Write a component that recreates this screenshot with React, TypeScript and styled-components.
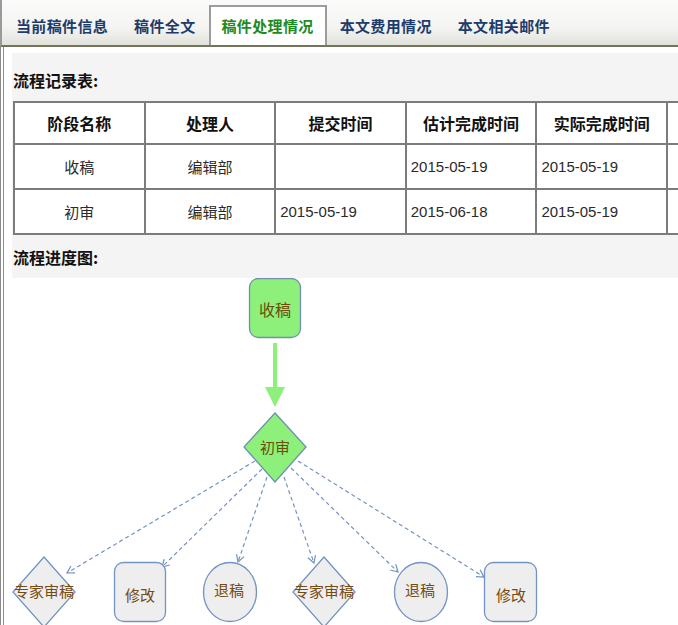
import React from "react";
import styled, { createGlobalStyle } from "styled-components";

const Global = createGlobalStyle`
  html, body { margin: 0; padding: 0; background: #fff; overflow: hidden; }
  body { font-family: "Noto Sans CJK SC", "Liberation Sans", sans-serif; }
`;

const Page = styled.div`
  width: 678px;
  height: 625px;
  overflow: hidden;
`;

const TabBar = styled.div`
  display: flex;
  align-items: flex-end;
  height: 45px;
  padding-left: 1px;
  border-left: 2px solid #9a9a9a;
  border-bottom: 2px solid #74745a;
  background: linear-gradient(#fbfbfb 0%, #f4f4f2 60%, #e2e2dc 100%);
  box-sizing: content-box;
`;

const Tab = styled.div<{ $active?: boolean }>`
  height: 40px;
  box-sizing: border-box;
  padding: 9px 11px 0 11px;
  border: 2px solid ${(p) => (p.$active ? "#9c9c9c" : "transparent")};
  border-bottom: none;
  background: ${(p) => (p.$active ? "#fff" : "transparent")};
  color: ${(p) => (p.$active ? "#1f8a1f" : "#1d3c6c")};
  font-size: 15px;
  font-weight: 700;
  line-height: 20px;
  letter-spacing: 0.35px;
  white-space: nowrap;
`;

const Content = styled.div`
  border-left: 4px double #8a8a8a;
  padding: 6px 0 0 8px;
  height: 600px;
`;

const InfoPanel = styled.div`
  background: #f4f4f4;
  padding-left: 1px;
  overflow: hidden;
`;

const SectionTitle = styled.div<{ $top: number; $bottom: number }>`
  padding-top: ${(p) => p.$top}px;
  padding-bottom: ${(p) => p.$bottom}px;
  font-size: 16px;
  font-weight: 700;
  line-height: 22px;
  color: #111;
`;

const FlowTable = styled.table`
  border-collapse: collapse;
  table-layout: fixed;
  width: 780px;
  background: #fff;
`;

const HeadCell = styled.th`
  width: 128.6px;
  height: 40px;
  border: 2px solid #7c7c7c;
  font-size: 16px;
  font-weight: 700;
  color: #111;
  text-align: center;
  padding: 0;
`;

const Cell = styled.td<{ $date?: boolean }>`
  height: 43px;
  border: 2px solid #7c7c7c;
  padding: 0 0 0 ${(p) => (p.$date ? "4px" : "0")};
  text-align: ${(p) => (p.$date ? "left" : "center")};
  font-family: ${(p) =>
    p.$date ? `"Liberation Sans", Arial, sans-serif` : `"Noto Sans CJK SC", sans-serif`};
  font-size: 15px;
  color: #2a2a2a;
`;

const Diagram = styled.svg`
  display: block;
  font-family: "Noto Sans CJK SC", sans-serif;
`;

const rows = [
  ["收稿", "编辑部", "", "2015-05-19", "2015-05-19"],
  ["初审", "编辑部", "2015-05-19", "2015-06-18", "2015-05-19"],
];

const heads = ["阶段名称", "处理人", "提交时间", "估计完成时间", "实际完成时间", ""];

const dashed = [
  [255, 461, 67, 573],
  [262, 469, 162, 567],
  [267, 477, 238, 562],
  [284, 477, 314, 563],
  [291, 468, 398, 572],
  [298, 461, 484, 577],
];

const NODE_STROKE = "#7393c4";
const GRAY_FILL = "#eeeeef";
const TXT = "#744a10";

function FlowChart() {
  return (
    <Diagram width={666} height={350} viewBox="12 278 666 350">
      <defs>
        <marker id="open" markerWidth="10" markerHeight="10" refX="8" refY="5" orient="auto" markerUnits="userSpaceOnUse">
          <polyline points="1,1 8,5 1,9" fill="none" stroke={NODE_STROKE} strokeWidth="1.2" />
        </marker>
      </defs>

      <rect x={249.5} y={278.5} width={51} height={59} rx={9} fill="#8cf07a" stroke="#6f90ae" strokeWidth={1.3} />
      <text x={275} y={309} fontSize={16} fill="#6b4c08" textAnchor="middle" dominantBaseline="central">收稿</text>

      <line x1={275} y1={343} x2={275} y2={389} stroke="#8cf07a" strokeWidth={4} />
      <polygon points="265,387 285,387 275,407" fill="#8cf07a" />

      <polygon points="275,413 306,447 275,482 244,447" fill="#8cf07a" stroke="#6f90ae" strokeWidth={1.3} />
      <text x={275} y={446} fontSize={15} fill="#6b4c08" textAnchor="middle" dominantBaseline="central">初审</text>

      {dashed.map(([x1, y1, x2, y2], i) => (
        <line key={i} x1={x1} y1={y1} x2={x2} y2={y2} stroke={NODE_STROKE} strokeWidth={1.2} strokeDasharray="4 3" markerEnd="url(#open)" />
      ))}

      <polygon points="44,557 75,592 44,627 13,592" fill={GRAY_FILL} stroke={NODE_STROKE} strokeWidth={1.3} />
      <text x={44} y={590} fontSize={15} fill={TXT} textAnchor="middle" dominantBaseline="central">专家审稿</text>

      <rect x={114.5} y={562.5} width={51} height={59} rx={9} fill={GRAY_FILL} stroke={NODE_STROKE} strokeWidth={1.3} />
      <text x={140} y={594} fontSize={15} fill={TXT} textAnchor="middle" dominantBaseline="central">修改</text>

      <ellipse cx={230} cy={592} rx={26.5} ry={29.5} fill={GRAY_FILL} stroke={NODE_STROKE} strokeWidth={1.3} />
      <text x={229} y={589} fontSize={15} fill={TXT} textAnchor="middle" dominantBaseline="central">退稿</text>

      <polygon points="324,557 355,592 324,627 293,592" fill={GRAY_FILL} stroke={NODE_STROKE} strokeWidth={1.3} />
      <text x={324} y={590} fontSize={15} fill={TXT} textAnchor="middle" dominantBaseline="central">专家审稿</text>

      <ellipse cx={421} cy={592} rx={26.5} ry={29.5} fill={GRAY_FILL} stroke={NODE_STROKE} strokeWidth={1.3} />
      <text x={420} y={589} fontSize={15} fill={TXT} textAnchor="middle" dominantBaseline="central">退稿</text>

      <rect x={484.5} y={562.5} width={52} height={59} rx={9} fill={GRAY_FILL} stroke={NODE_STROKE} strokeWidth={1.3} />
      <text x={511} y={594} fontSize={15} fill={TXT} textAnchor="middle" dominantBaseline="central">修改</text>
    </Diagram>
  );
}

export default function App() {
  const tabs = ["当前稿件信息", "稿件全文", "稿件处理情况", "本文费用情况", "本文相关邮件"];
  return (
    <Page>
      <Global />
      <TabBar>
        {tabs.map((t, i) => (
          <Tab key={t} $active={i === 2}>{t}</Tab>
        ))}
      </TabBar>
      <Content>
        <InfoPanel>
          <SectionTitle $top={16} $bottom={10}>流程记录表:</SectionTitle>
          <FlowTable>
            <thead>
              <tr>
                {heads.map((h, i) => (
                  <HeadCell key={i}>{h}</HeadCell>
                ))}
              </tr>
            </thead>
            <tbody>
              {rows.map((r, ri) => (
                <tr key={ri}>
                  {r.map((c, ci) => (
                    <Cell key={ci} $date={ci >= 2}>{c}</Cell>
                  ))}
                  <Cell />
                </tr>
              ))}
            </tbody>
          </FlowTable>
          <SectionTitle $top={11} $bottom={10}>流程进度图:</SectionTitle>
        </InfoPanel>
        <FlowChart />
      </Content>
    </Page>
  );
}
